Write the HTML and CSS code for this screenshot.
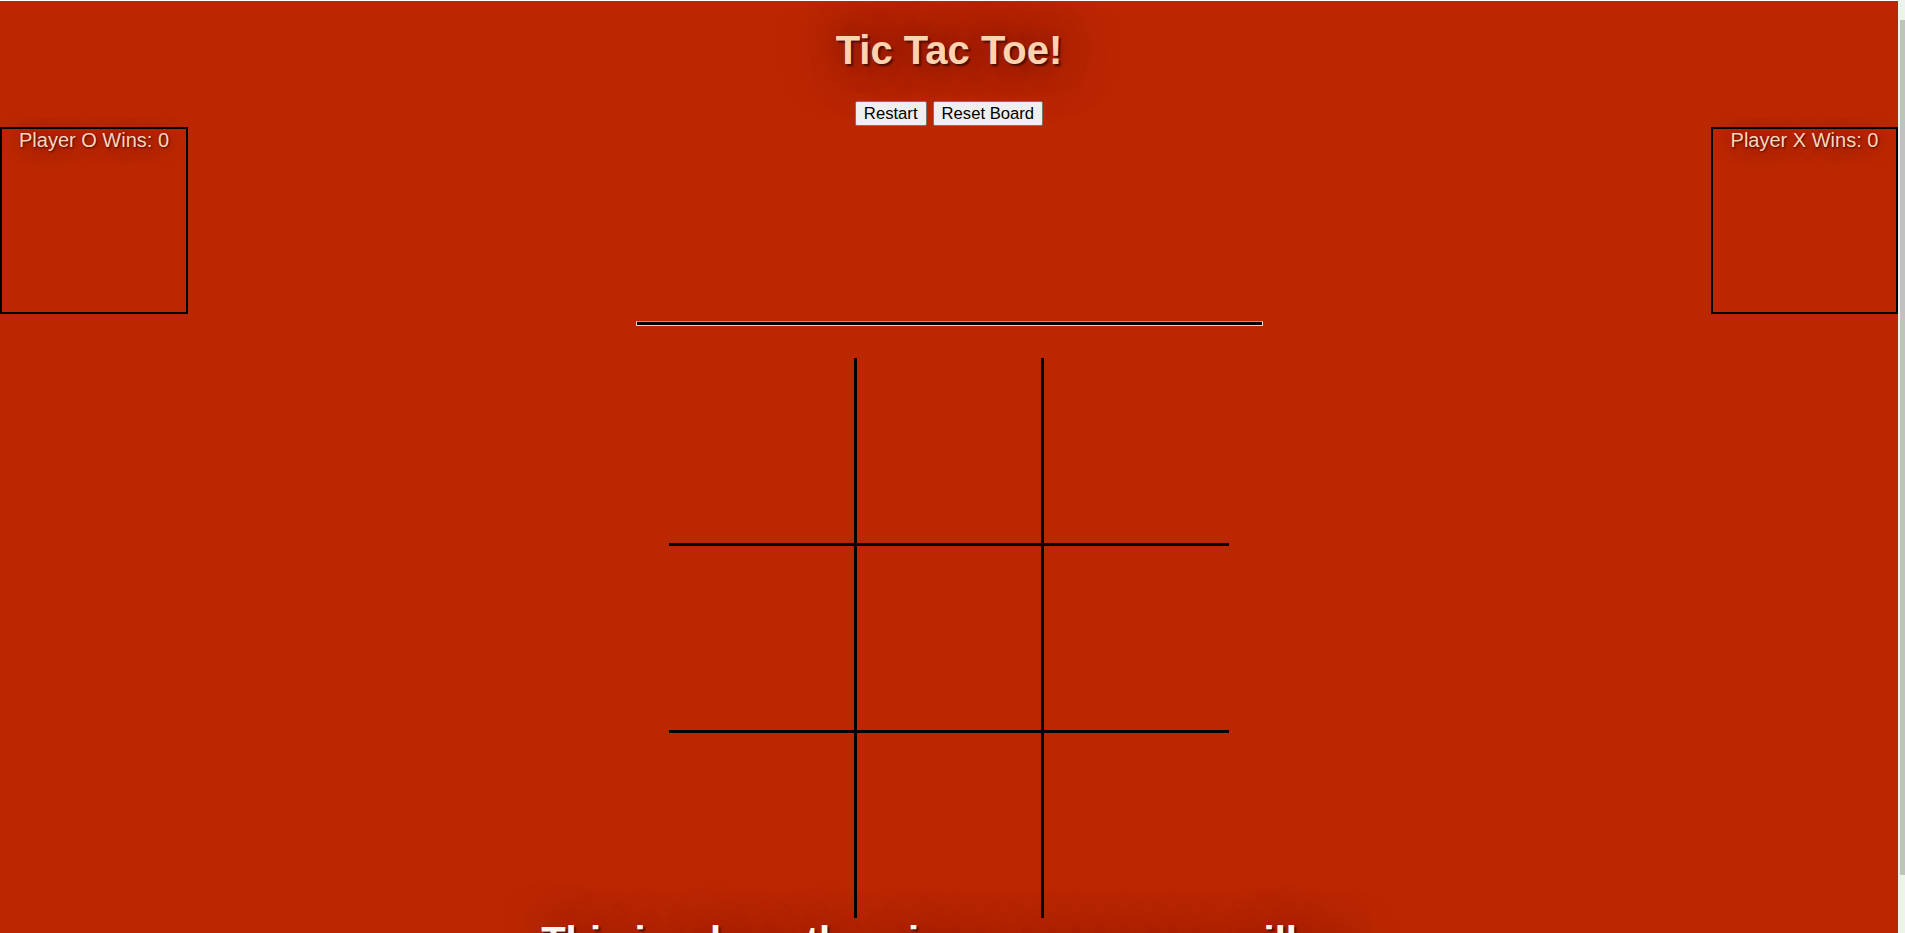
FILE: index.html
```html
<!DOCTYPE html>
<html lang="en">
<head>
<meta charset="utf-8">
<title>Tic Tac Toe!</title>
<link rel="stylesheet" href="styles.css">
</head>
<body>
  <main class="page">
    <h1 class="title">Tic Tac Toe!</h1>
    <div class="controls">
      <button class="btn">Restart</button>
      <button class="btn">Reset Board</button>
    </div>
    <div class="scores">
      <div class="score">Player O Wins: 0</div>
      <div class="score">Player X Wins: 0</div>
    </div>
    <div class="divider"></div>
    <div class="board">
      <div class="cell"></div>
      <div class="cell"></div>
      <div class="cell"></div>
      <div class="cell"></div>
      <div class="cell"></div>
      <div class="cell"></div>
      <div class="cell"></div>
      <div class="cell"></div>
      <div class="cell"></div>
    </div>
    <p class="message">This is where the winner announcer will go</p>
  </main>
  <div class="scrollbar"><div class="thumb"></div></div>
</body>
</html>
```
FILE: styles.css
```css
html, body {
  margin: 0;
  padding: 0;
  height: 100%;
}

body {
  display: flex;
  overflow: hidden;
  background: #ffffff;
  font-family: "Liberation Sans", Arial, sans-serif;
  font-size: 20px;
}

.page {
  flex: 1;
  margin-top: 1px;
  background: #bb2700;
  display: flex;
  flex-direction: column;
  align-items: center;
  overflow: hidden;
}

.page > * {
  flex-shrink: 0;
}

.title {
  margin: 26px 0 0;
  font-size: 40px;
  font-weight: bold;
  line-height: 46px;
  color: #ffd3b0;
  text-shadow: 2px 2px 2px #4a0c00, 0 0 30px rgba(90, 12, 0, 0.75), 0 0 60px rgba(90, 12, 0, 0.5);
}

.controls {
  margin-top: 28px;
  display: flex;
  gap: 6px;
}

.btn {
  font-family: "Liberation Sans", Arial, sans-serif;
  font-size: 16.67px;
  height: 25px;
  padding: 0 8px;
  color: #000;
  background: #efefef;
  border: 1px solid #767676;
  border-radius: 2px;
}

.scores {
  margin-top: 1px;
  align-self: stretch;
  display: flex;
  justify-content: space-between;
}

.score {
  box-sizing: border-box;
  width: 188px;
  height: 187px;
  border: 2px solid #000;
  text-align: center;
  line-height: 23px;
  color: #fbd6b8;
  text-shadow: 1px 1px 2px #4a0c00, 0 0 18px rgba(90, 12, 0, 0.7);
}

.score:last-child {
  width: 187px;
}

.divider {
  margin-top: 7px;
  width: 625px;
  height: 3px;
  background: #000;
  border: 1px solid #e2d4cc;
  border-top-color: #a8968e;
}

.board {
  margin-top: 32px;
  display: grid;
  grid-template-columns: repeat(3, 184.67px);
  grid-template-rows: repeat(3, 184.67px);
  gap: 3px;
  background: #000;
}

.cell {
  background: #bb2700;
}

.message {
  margin: 0;
  font-size: 40px;
  font-weight: bold;
  line-height: 46px;
  color: #fff6f0;
  text-shadow: 2px 2px 2px #4a0c00, 0 0 40px rgba(90, 12, 0, 0.75);
  white-space: nowrap;
}

.scrollbar {
  width: 7px;
  background: #f1f1f1;
  display: flex;
  flex-direction: column;
  padding-top: 20px;
  padding-bottom: 58px;
  box-sizing: border-box;
}

.thumb {
  flex: 1;
  margin-left: 2px;
  background: #c1c1c1;
}
```
